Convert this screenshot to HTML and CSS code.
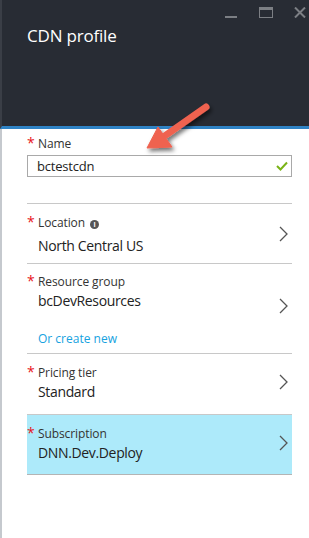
FILE: index.html
```html
<!DOCTYPE html>
<html>

<head>
  <meta charset="UTF-8">
  <meta name="viewport" content="width=device-width, initial-scale=1.0">
  <title>CDN profile</title>
  <link rel="stylesheet" href="styles.css">
</head>

<body>
  <div class="blade">
    <div class="head">
      <div class="controls">
        <span class="ctl min"></span>
        <span class="ctl max"></span>
        <svg class="ctl close" width="12" height="11" viewBox="0 0 12 11">
          <path d="M1 0.5 L11 10.5 M11 0.5 L1 10.5" stroke="#7c7f84" stroke-width="2" fill="none" />
        </svg>
      </div>
      <h2>CDN profile</h2>
    </div>
    <div class="form">
      <div class="field name">
        <label><i>*</i>Name</label>
        <div class="input">
          <span>bctestcdn</span>
          <svg width="12" height="10" viewBox="0 0 12 10">
            <path d="M1 5 L4.5 8.5 L11 1.5" stroke="#7ab317" stroke-width="2" fill="none" />
          </svg>
        </div>
      </div>
      <div class="row location">
        <div class="text">
          <label><i>*</i>Location <b class="info">i</b></label>
          <p>North Central US</p>
        </div>
        <svg class="chev" width="9" height="16" viewBox="0 0 9 16">
          <path d="M1 1 L8 8 L1 15" stroke="#555" stroke-width="1.3" fill="none" />
        </svg>
      </div>
      <div class="row group">
        <div class="top">
          <div class="text">
            <label><i>*</i>Resource group</label>
            <p>bcDevResources</p>
          </div>
          <svg class="chev" width="9" height="16" viewBox="0 0 9 16">
            <path d="M1 1 L8 8 L1 15" stroke="#555" stroke-width="1.3" fill="none" />
          </svg>
        </div>
        <a class="create">Or create new</a>
      </div>
      <div class="row pricing">
        <div class="text">
          <label><i>*</i>Pricing tier</label>
          <p>Standard</p>
        </div>
        <svg class="chev" width="9" height="16" viewBox="0 0 9 16">
          <path d="M1 1 L8 8 L1 15" stroke="#555" stroke-width="1.3" fill="none" />
        </svg>
      </div>
      <div class="row sub active">
        <div class="text">
          <label><i>*</i>Subscription</label>
          <p>DNN.Dev.Deploy</p>
        </div>
        <svg class="chev" width="9" height="16" viewBox="0 0 9 16">
          <path d="M1 1 L8 8 L1 15" stroke="#555" stroke-width="1.3" fill="none" />
        </svg>
      </div>
    </div>
  </div>
  <svg class="arrow" width="100" height="70" viewBox="0 0 100 70">
    <defs>
      <filter id="sh" x="-20%" y="-20%" width="150%" height="150%">
        <feDropShadow dx="2" dy="3" stdDeviation="2" flood-color="#000" flood-opacity="0.55" />
      </filter>
    </defs>
    <g filter="url(#sh)" fill="#ef6250" stroke="#ef6250">
      <path d="M76 12 L36 40" stroke-width="7" stroke-linecap="round" fill="none" />
      <path d="M17 53 L28 32 L42 52 Z" stroke-width="1" stroke-linejoin="round" />
    </g>
  </svg>
</body>

</html>
```

FILE: styles.css
```css
* {
  padding: 0;
  margin: 0;
  box-sizing: border-box;
}

body {
  overflow: hidden;
  background: #fff;
  font-family: "Open Sans", "Noto Sans", sans-serif;
  position: relative;
}

.blade {
  width: 309px;
  height: 538px;
  display: flex;
  flex-direction: column;
}

.head {
  height: 129px;
  background: #282c34;
  border-left: 2px solid #3a3e46;
  border-bottom: 3px solid #2f83c5;
  display: flex;
  flex-direction: column;
}

.controls {
  height: 24px;
  display: flex;
  flex-direction: row;
  justify-content: flex-end;
  align-items: flex-start;
  padding-right: 3px;
}

.ctl {
  display: block;
}

.min {
  width: 12px;
  height: 2px;
  background: #7c7f84;
  margin-top: 16px;
  margin-right: 22px;
}

.max {
  width: 14px;
  height: 11px;
  border: 1.5px solid #7c7f84;
  border-top-width: 3px;
  margin-top: 7px;
  margin-right: 21px;
}

.close {
  margin-top: 7px;
}

.head>h2 {
  color: #fff;
  font-weight: 400;
  font-size: 17px;
  line-height: 24px;
  padding-left: 25px;
  margin-top: 0;
  letter-spacing: -0.2px;
}

.form {
  flex: 1;
  border-left: 2px solid #c5c9ce;
  padding: 0 17px 0 25px;
}

label {
  display: block;
  font-size: 12px;
  line-height: 18px;
  color: #333;
  letter-spacing: -0.1px;
}

label>i {
  font-style: normal;
  color: #e8141b;
  display: inline-block;
  width: 11px;
  font-size: 14px;
  line-height: 12px;
}

.field.name {
  padding: 6px 0 26px;
  border-bottom: 1px solid #c8c8c8;
}

.input {
  margin-top: 2px;
  height: 22px;
  border: 1px solid #a9a9a9;
  display: flex;
  flex-direction: row;
  align-items: center;
  justify-content: space-between;
  padding: 0 3px 0 9px;
  font-size: 13px;
  color: #222;
  letter-spacing: -0.2px;
}

.row {
  display: flex;
  flex-direction: row;
  align-items: center;
  justify-content: space-between;
  padding: 10px 4px 12px 0;
  border-bottom: 1px solid #c8c8c8;
}

.row p {
  font-size: 14px;
  line-height: 20px;
  color: #222;
  padding-left: 11px;
  letter-spacing: -0.35px;
}

.row.location {
  padding-bottom: 7px;
}

.row.location p {
  margin-top: 4px;
}

.info {
  display: inline-block;
  width: 9px;
  height: 9px;
  border-radius: 5px;
  background: #555;
  color: #fff;
  font-size: 7px;
  line-height: 9px;
  text-align: center;
  font-weight: 700;
  vertical-align: 0;
  margin-left: 2px;
}

.chev {
  margin-bottom: 3px;
}

.row.group {
  flex-direction: column;
  align-items: stretch;
  padding: 9px 0 5px;
}

.group>.top {
  display: flex;
  flex-direction: row;
  align-items: flex-start;
  justify-content: space-between;
  padding-right: 4px;
}

.group .chev {
  margin-top: 25px;
  margin-bottom: 0;
}

.create {
  display: block;
  font-size: 12px;
  line-height: 18px;
  color: #16a2e0;
  padding-left: 11px;
  margin-top: 16px;
}

.row.pricing {
  padding-bottom: 12px;
}

.row.sub {
  padding: 10px 4px 11px 0;
  border-bottom: 1px solid #b4b4b4;
}

.row.active {
  background: #adeafa;
}

.arrow {
  position: absolute;
  left: 130px;
  top: 95px;
}
```
